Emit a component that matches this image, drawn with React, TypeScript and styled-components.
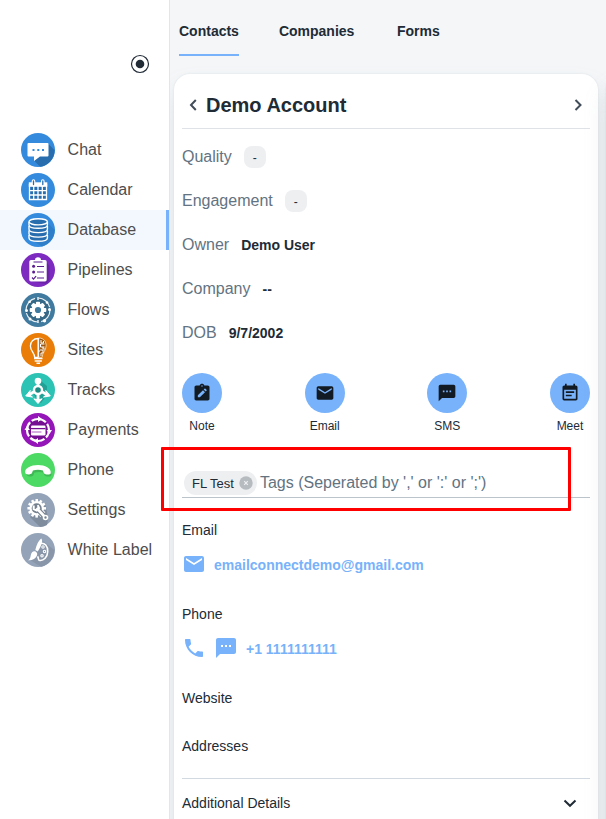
import React from "react";
import styled, { createGlobalStyle } from "styled-components";
import { MdEmail, MdEventNote, MdPhone, MdSms } from "react-icons/md";

const GlobalStyle = createGlobalStyle`
  * { box-sizing: border-box; }
  body {
    margin: 0;
    overflow: hidden;
    font-family: "Liberation Sans", Arial, sans-serif;
    color: #212b36;
    background: #f4f6f8;
  }
`;

const Page = styled.div`
  position: relative;
  display: flex;
  width: 606px;
  height: 819px;
  overflow: hidden;
`;

const Sidebar = styled.aside`
  position: relative;
  z-index: 1;
  flex: none;
  display: flex;
  flex-direction: column;
  width: 170px;
  background: #fff;
  border-right: 1px solid #e2e6ea;
`;

const SidebarTop = styled.div`
  display: flex;
  justify-content: flex-end;
  height: 130px;
  padding: 54px 19px 0 0;
`;

const NavItem = styled.a<{ $active?: boolean }>`
  display: flex;
  align-items: center;
  gap: 12.6px;
  height: 40px;
  padding-left: 21px;
  font-size: 16px;
  line-height: 20px;
  color: #4d4d4d;
  background: ${(p) => (p.$active ? "#f3f8ff" : "transparent")};
  box-shadow: ${(p) => (p.$active ? "inset -3px 0 0 #77b2fa" : "none")};
  white-space: nowrap;

  svg { flex: none; }
`;

const Main = styled.main`
  flex: 1;
  display: flex;
  flex-direction: column;
  min-width: 0;
`;

const Tabs = styled.nav`
  flex: none;
  display: flex;
  height: 74px;
  padding: 0 9px;
`;

const Tab = styled.a<{ $active?: boolean; $gap: number }>`
  height: 56px;
  margin-right: ${(p) => p.$gap}px;
  padding-top: 23px;
  font-size: 14px;
  line-height: 16px;
  font-weight: 700;
  border-bottom: 2px solid ${(p) => (p.$active ? "#78b2fa" : "transparent")};
`;

const Columns = styled.div`
  flex: 1;
  display: flex;
  gap: 8px;
  padding-left: 4px;
  min-height: 0;
`;

const Card = styled.section`
  flex: none;
  width: 424px;
  height: 800px;
  padding: 0 8px;
  background: #fff;
  border-radius: 16px;
  box-shadow: 0 0 2px rgba(145, 158, 171, 0.24), 0 14px 24px -2px rgba(145, 158, 171, 0.22);
`;

const CardHeader = styled.header`
  display: flex;
  align-items: center;
  height: 55px;
  padding: 7px 4px 0 3px;
  border-bottom: 1px solid #dfe3e8;
`;

const Title = styled.h1`
  flex: 1;
  margin: 0 0 0 5px;
  font-size: 20px;
  line-height: 24px;
`;

const Field = styled.div`
  display: flex;
  align-items: center;
  gap: 12px;
  height: 44px;
  font-size: 16px;
  line-height: 20px;
  color: #637381;
`;

const Fields = styled.div`
  padding-top: 6px;
`;

const FieldValue = styled.strong`
  font-size: 14px;
  line-height: 20px;
  color: #212b36;
`;

const Badge = styled.span`
  display: flex;
  align-items: center;
  justify-content: center;
  width: 22px;
  height: 22px;
  padding-top: 1px;
  border-radius: 8px;
  background: #edeff1;
  color: #212b36;
  font-size: 12px;
`;

const Actions = styled.div`
  display: flex;
  justify-content: space-between;
  margin-top: 18px;
  height: 62px;
`;

const Action = styled.button`
  display: flex;
  flex-direction: column;
  align-items: center;
  gap: 5px;
  width: 40px;
  padding: 0;
  border: 0;
  background: none;
  color: #212b36;
  font: 12px/16px "Liberation Sans", Arial, sans-serif;
`;

const ActionDisc = styled.span`
  display: flex;
  align-items: center;
  justify-content: center;
  width: 40px;
  height: 40px;
  border-radius: 50%;
  background: #78b2fa;
  color: #121a24;
`;

const TagInput = styled.div`
  display: flex;
  align-items: center;
  height: 28px;
  margin-top: 35px;
  padding: 0 2px 1px;
  border-bottom: 1px solid #bcc4cb;
  font-size: 16px;
  color: #637381;
`;

const Chip = styled.span`
  display: flex;
  align-items: center;
  gap: 5px;
  height: 24px;
  margin-right: 3px;
  padding: 0 4px 0 8px;
  border-radius: 12px;
  background: #edeff1;
  color: #212b36;
  font-size: 13px;
`;

const SectionLabel = styled.div<{ $top: number }>`
  height: 20px;
  margin-top: ${(p) => p.$top}px;
  font-size: 14px;
  line-height: 20px;
`;

const ContactLine = styled.div`
  display: flex;
  align-items: center;
  gap: 8px;
  height: 24px;
  margin-top: 12px;
  color: #78b2fa;
  font-size: 14px;
  font-weight: 700;

  span { padding-top: 2px; }
`;

const Accordion = styled.div`
  display: flex;
  align-items: center;
  justify-content: space-between;
  height: 49px;
  margin-top: 22px;
  padding-right: 12px;
  border-top: 1px solid #d2d9e0;
  font-size: 14px;
`;

const Highlight = styled.div`
  position: absolute;
  z-index: 2;
  left: 161px;
  top: 447px;
  width: 410px;
  height: 64px;
  border: 3px solid #fe0000;
  border-radius: 1px;
`;

const Disc = ({ color, children }: { color: string; children: React.ReactNode }) => (
  <svg width="34" height="34" viewBox="0 0 34 34">
    <circle cx="17" cy="17" r="17" fill={color} />
    {children}
  </svg>
);

const ChatIcon = () => (
  <Disc color="#348bdd">
    <path d="M27.5 11 33.6 17.2A17 17 0 0 1 19 33.8L13.5 28Z" fill="#286dae" />
    <path d="M7.5 10h19a1 1 0 0 1 1 1v11.5a1 1 0 0 1-1 1H19L13 28v-4.5H7.5a1 1 0 0 1-1-1V11a1 1 0 0 1 1-1Z" fill="#fff" />
    <path d="M11.5 16h2v2h-2zm4.8 0h2v2h-2zm4.7 0h2v2h-2z" fill="#348bdd" />
  </Disc>
);

const CalendarIcon = () => (
  <Disc color="#348bdd">
    <rect x="8" y="12" width="18" height="15" fill="#286dae" />
    <path d="M8.5 11v15.5h17V11M8.5 17.7h17M8.5 22h17M12.7 13v13.5M17 13v13.5M21.3 13v13.5" fill="none" stroke="#fff" strokeWidth="1.3" />
    <rect x="7.8" y="9.3" width="18.5" height="4.5" fill="#fff" />
    <path d="M12.5 8v4M21.8 8v4" stroke="#fff" strokeWidth="3.6" strokeLinecap="round" />
    <path d="M12.5 8v3.5M21.8 8v3.5" stroke="#286dae" strokeWidth="1.3" strokeLinecap="round" />
  </Disc>
);

const DatabaseIcon = () => (
  <Disc color="#348bdd">
    <path d="M26 9 33.6 17A17 17 0 0 1 21 33.4L11 27Z" fill="#2f7ec9" />
    <g stroke="#fff" strokeWidth="1.4">
      <path d="M8 22v3c0 4.4 18.4 4.4 18.4 0v-3" fill="#286dae" />
      <path d="M8 17.5v3.3c0 4.4 18.4 4.4 18.4 0v-3.3" fill="#286dae" />
      <path d="M8 13v3.3c0 4.4 18.4 4.4 18.4 0V13" fill="#286dae" />
      <path d="M8 9v3c0 4.4 18.4 4.4 18.4 0V9" fill="#286dae" />
      <ellipse cx="17.2" cy="8.8" rx="9.2" ry="3.1" fill="#286dae" />
    </g>
  </Disc>
);

const PipelinesIcon = () => (
  <Disc color="#7c2abf">
    <path d="m26 10 2.5 3v14L25 31 9 28Z" fill="#6a22a6" />
    <path d="M10 7h4a3 2.7 0 0 1 6 0h4a1.7 1.7 0 0 1 1.7 1.7v18a1.7 1.7 0 0 1-1.7 1.7H10a1.7 1.7 0 0 1-1.7-1.7v-18A1.7 1.7 0 0 1 10 7Z" fill="#fff" />
    <g stroke="#5b1c90" strokeWidth="1.2" fill="none">
      <path d="M12.5 9h9M16 13.5h7M16 19h7M16 25h7" />
      <path d="m11 24.5 1.5 1.6 2.6-3" />
    </g>
    <circle cx="12.6" cy="13.3" r="1.5" fill="#5b1c90" />
    <circle cx="12.6" cy="19" r="1.5" fill="#5b1c90" />
  </Disc>
);

const teeth = (count: number) => Array.from({ length: count }, (_, i) => (360 / count) * i);

const FlowsIcon = () => (
  <Disc color="#407a9f">
    <circle cx="17" cy="17" r="12" fill="#356786" stroke="#e8f0f4" strokeWidth="1.2" strokeDasharray="15.5 3.35" />
    <path d="M17 4v3M17 27v3" stroke="#e8f0f4" strokeWidth="1.5" />
    <g fill="#fff">
      <circle cx="5.5" cy="17.5" r="1.5" />
      <circle cx="28.5" cy="16.5" r="1.5" />
      <circle cx="8.7" cy="8.7" r="1.3" />
      <circle cx="26" cy="9.5" r="1.3" />
      <circle cx="9" cy="26" r="1.5" />
      <circle cx="23.5" cy="27.7" r="1.7" />
      {teeth(8).map((a) => (
        <rect key={a} x="14.9" y="8.7" width="4.2" height="4.5" rx="1" transform={`rotate(${a} 17 17)`} />
      ))}
    </g>
    <circle cx="17" cy="17" r="4.8" fill="#407a9f" stroke="#fff" strokeWidth="3.4" />
  </Disc>
);

const SitesIcon = () => (
  <Disc color="#e97d08">
    <path d="M17.2 5.5c-4.9 0-7.8 3.4-7.8 7.4 0 5 4.3 6.8 4.3 11.5h3.5Z" fill="#df7606" stroke="#fff" strokeWidth="1.3" />
    <path d="M17.8 5c4.9 0 7.3 3.4 7.3 7.8 0 5-4 6.8-4 11.4h-3.3Z" fill="#9c5810" stroke="#ffe4bd" strokeWidth=".8" />
    <path d="M20 7v3h2.5V8M23.5 11h-4v3h4M20 23v-3h2v-3h-3M22 14v2h2M18 17v2" fill="none" stroke="#fff" strokeWidth="1" />
    <path d="M17.4 5v19" stroke="#fff" />
    <path d="M13 25.5h8.5M13.7 28h7.2M15.5 30.2h3.6" stroke="#fff" strokeWidth="1.5" />
  </Disc>
);

const TracksIcon = () => (
  <Disc color="#2cc2b4">
    <path d="m20 8 6 5v9l-6 8-3-1-5-9Z" fill="#22a297" />
    <g stroke="#fff" strokeWidth="2.9">
      <path d="M17 8v5M17 21v6M13.5 18.6 8 21.8M20.5 18.6l5.5 3.2" />
    </g>
    <g fill="#fff">
      <circle cx="17" cy="8" r="3.3" />
      <path d="M12.8 25.8 17 30.5l4.2-4.7-4.2 1.2ZM9.2 17.5 4.7 22.9l6.8 1.2-3-2.4ZM24.8 17.5l4.5 5.4-6.8 1.2 3-2.4Z" stroke="#fff" strokeLinejoin="round" />
    </g>
    <circle cx="17" cy="17" r="4" fill="#1b8a82" stroke="#fff" strokeWidth="2.4" />
  </Disc>
);

const PaymentsIcon = () => (
  <Disc color="#9415b8">
    <circle cx="17" cy="17" r="11" fill="#740f92" stroke="#fff" strokeWidth="2.2" strokeDasharray="15.3 1.98" strokeDashoffset="7" />
    <path d="m17 3 4 3-4 3ZM17 25l-4 3 4 3ZM3.5 17l2.5-4 3 4ZM25.5 17l3 4 2.5-4Z" fill="#fff" />
    <rect x="10" y="12.5" width="14.5" height="10" rx="1.2" fill="#fff" />
    <path d="M10 15.6h14.5" stroke="#740f92" strokeWidth="1.3" />
    <path d="M10.5 19h10" stroke="#b779c8" strokeWidth="1.2" />
  </Disc>
);

const PhoneIcon = () => (
  <Disc color="#4cd964">
    <path d="M5 21c.7 2.4 5.5 2 6.7.5l.6-2.6c3-1 7-1 9.6 0l.7 2.6c1.4 1.5 6.7 1.9 7 0 1-4.6-6-7.3-12.4-7.3C10.7 14.2 4 16.2 5 21Z" fill="#3fb855" transform="translate(.8 .8)" />
    <path d="M4.2 19.8c.4 2.5 5.6 2 6.8.2l.9-2.6c3-1 7-1 10 0l.9 2.6c1.3 1.8 6.5 2.2 7 .2C30.5 15.4 24 12.1 17 12.1S3.4 15.2 4.2 19.8Z" fill="#fff" />
  </Disc>
);

const SettingsIcon = () => (
  <Disc color="#94a3b8">
    <path d="m24 10 2.5 12 .5 4-1 6a17 17 0 0 1-7 2L9 24Z" fill="#7f8c9e" />
    {teeth(12).map((a) => (
      <rect key={a} x="14.5" y="6" width="2.5" height="4.2" fill="#fff" transform={`rotate(${a} 15.7 15.3)`} />
    ))}
    <circle cx="15.7" cy="15.3" r="6.2" fill="#75818f" stroke="#fff" strokeWidth="2.3" />
    <path d="m15.5 15 8.5 9" stroke="#75818f" strokeWidth="5" />
    <path d="m15.5 15 8.5 9" stroke="#fff" strokeWidth="2.7" />
    <path d="M12.7 12.5v3.7l3 1.3 2.4-2.4-1.4-3" fill="none" stroke="#fff" strokeWidth="2" />
    <circle cx="24.5" cy="24.5" r="2" fill="#75818f" stroke="#fff" strokeWidth="1.6" />
  </Disc>
);

const WhiteLabelIcon = () => (
  <Disc color="#94a3b8">
    <path d="m22 8 11.3 9A17 17 0 0 1 20 33.7L9 27Z" fill="#8996a9" />
    <path d="M18.5 10.5c5.5-1.5 8.5 3 8.2 8.2-.3 5.5-4 9.2-8 8.8-2.2-.3-.7-2.8-2.2-4.2" fill="none" stroke="#fff" strokeWidth="1.6" />
    <g fill="none" stroke="#fff" strokeWidth="1.1">
      <circle cx="22" cy="14" r="1.2" />
      <circle cx="23.5" cy="18.5" r="1.2" />
      <circle cx="21" cy="22.8" r="1.2" />
    </g>
    <path d="M20.5 5.5c1.7 3.6-.8 8.5-3.8 13l-2.4-1.4c1.3-5.2 3-9.6 6.2-11.6Z" fill="#fff" />
    <path d="M13.7 18.3c2.6.8 3.3 3 1.6 5.5-1.8 2.7-4.7 4-8.3 3.4 2.2-1 2.2-2.6 2.8-5 .6-2.5 2-4.2 3.9-3.9Z" fill="#fff" />
  </Disc>
);

const ToggleIcon = () => (
  <svg width="20" height="20" viewBox="0 0 20 20">
    <circle cx="10" cy="10" r="8.5" fill="none" stroke="#212b36" strokeWidth="1.2" />
    <circle cx="10" cy="10" r="4.3" fill="#212b36" />
  </svg>
);

const NoteIcon = () => (
  <svg width="20" height="20" viewBox="0 0 24 24">
    <path
      fill="#121a24"
      fillRule="evenodd"
      d="M19 3h-4.18C14.4 1.84 13.3 1 12 1s-2.4.84-2.82 2H5c-1.1 0-2 .9-2 2v14c0 1.1.9 2 2 2h14c1.1 0 2-.9 2-2V5c0-1.1-.9-2-2-2zm-7-.2c.5 0 .9.4.9.9s-.4.9-.9.9-.9-.4-.9-.9.4-.9.9-.9z"
    />
    <path fill="#78b2fa" d="m7 14.8 6.2-6.2 2.4 2.4L9.4 17.2H7zm7-7 1-1c.3-.3.8-.3 1.1 0l1.3 1.3c.3.3.3.8 0 1.1l-1 1z" />
  </svg>
);

const Chevron = ({ d, color = "#424d5a" }: { d: string; color?: string }) => (
  <svg width="16" height="16" viewBox="0 0 16 16">
    <path d={d} fill="none" stroke={color} strokeWidth="2" />
  </svg>
);

const RemoveIcon = () => (
  <svg width="14" height="14" viewBox="0 0 14 14">
    <circle cx="7" cy="7" r="6.7" fill="#b6bbc0" />
    <path d="m5.2 5.2 3.6 3.6m0-3.6L5.2 8.8" stroke="#edeff1" strokeWidth="1.2" />
  </svg>
);

const navItems = [
  { label: "Chat", Icon: ChatIcon },
  { label: "Calendar", Icon: CalendarIcon },
  { label: "Database", Icon: DatabaseIcon, active: true },
  { label: "Pipelines", Icon: PipelinesIcon },
  { label: "Flows", Icon: FlowsIcon },
  { label: "Sites", Icon: SitesIcon },
  { label: "Tracks", Icon: TracksIcon },
  { label: "Payments", Icon: PaymentsIcon },
  { label: "Phone", Icon: PhoneIcon },
  { label: "Settings", Icon: SettingsIcon },
  { label: "White Label", Icon: WhiteLabelIcon },
];

const actions = [
  { label: "Note", icon: <NoteIcon /> },
  { label: "Email", icon: <MdEmail size={20} /> },
  { label: "SMS", icon: <MdSms size={20} /> },
  { label: "Meet", icon: <MdEventNote size={20} /> },
];

export default function App() {
  return (
    <>
      <GlobalStyle />
      <Page>
        <Sidebar>
          <SidebarTop>
            <ToggleIcon />
          </SidebarTop>
          {navItems.map(({ label, Icon, active }) => (
            <NavItem key={label} $active={active}>
              <Icon />
              <span>{label}</span>
            </NavItem>
          ))}
        </Sidebar>
        <Main>
          <Tabs>
            <Tab $active $gap={40}>Contacts</Tab>
            <Tab $gap={42.5}>Companies</Tab>
            <Tab $gap={0}>Forms</Tab>
          </Tabs>
          <Columns>
            <Card>
              <CardHeader>
                <Chevron d="M10.8 3 6 8l4.8 5" />
                <Title>Demo Account</Title>
                <Chevron d="M5.5 3 10.5 8l-5 5" />
              </CardHeader>
              <Fields>
                <Field>Quality <Badge>-</Badge></Field>
                <Field>Engagement <Badge>-</Badge></Field>
                <Field>Owner <FieldValue>Demo User</FieldValue></Field>
                <Field>Company <FieldValue>--</FieldValue></Field>
                <Field>DOB <FieldValue>9/7/2002</FieldValue></Field>
              </Fields>
              <Actions>
                {actions.map(({ label, icon }) => (
                  <Action key={label}>
                    <ActionDisc>{icon}</ActionDisc>
                    {label}
                  </Action>
                ))}
              </Actions>
              <TagInput>
                <Chip>FL Test <RemoveIcon /></Chip>
                Tags (Seperated by ',' or ':' or ';')
              </TagInput>
              <SectionLabel $top={22}>Email</SectionLabel>
              <ContactLine>
                <MdEmail size={24} />
                <span>emailconnectdemo@gmail.com</span>
              </ContactLine>
              <SectionLabel $top={28}>Phone</SectionLabel>
              <ContactLine>
                <MdPhone size={24} />
                <MdSms size={24} />
                <span>+1 1111111111</span>
              </ContactLine>
              <SectionLabel $top={28}>Website</SectionLabel>
              <SectionLabel $top={28}>Addresses</SectionLabel>
              <Accordion>
                Additional Details
                <Chevron d="M2.5 5.5 8 10.8l5.5-5.3" color="#212b36" />
              </Accordion>
            </Card>
            <Card />
          </Columns>
        </Main>
        <Highlight />
      </Page>
    </>
  );
}
